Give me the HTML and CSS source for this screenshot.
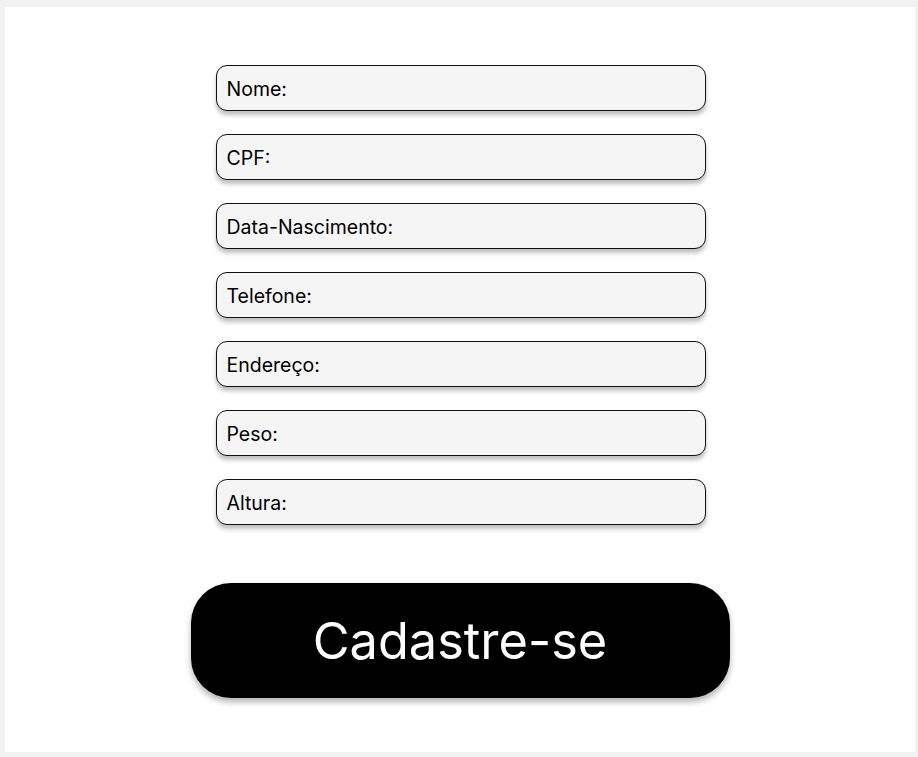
FILE: index.html
```html
<!DOCTYPE html>
<html lang="pt-BR">
<head>
<meta charset="utf-8">
<title>Cadastro</title>
<link rel="stylesheet" href="styles.css">
</head>
<body>
<main class="panel">
  <form class="form">
    <div class="fields">
      <label class="field">Nome:</label>
      <label class="field">CPF:</label>
      <label class="field">Data-Nascimento:</label>
      <label class="field">Telefone:</label>
      <label class="field">Endereço:</label>
      <label class="field">Peso:</label>
      <label class="field">Altura:</label>
    </div>
    <button type="button" class="submit">Cadastre-se</button>
  </form>
</main>
</body>
</html>
```
FILE: styles.css
```css
html, body {
  margin: 0;
  padding: 0;
  background: #f2f2f2;
  font-family: Inter, "Noto Sans", sans-serif;
}
.panel {
  box-sizing: border-box;
  width: 910px;
  height: 745px;
  margin: 7px 0 0 5px;
  background: #ffffff;
  padding-top: 58px;
}
.form {
  display: flex;
  flex-direction: column;
  align-items: center;
}
.fields {
  display: flex;
  flex-direction: column;
  gap: 23px;
  margin-left: 1px;
}
.field {
  box-sizing: border-box;
  width: 490px;
  height: 46px;
  display: flex;
  align-items: center;
  padding-left: 10px;
  padding-top: 1px;
  background: #f5f5f5;
  border: 1.5px solid #111;
  border-radius: 11px;
  box-shadow: 0 4px 4px rgba(0, 0, 0, 0.25);
  font-size: 19.5px;
  color: #000;
}
.submit {
  box-sizing: border-box;
  margin-top: 58px;
  width: 539px;
  height: 115px;
  border: none;
  border-radius: 40px;
  background: #000;
  color: #fff;
  font-family: Inter, "Noto Sans", sans-serif;
  font-size: 50.5px;
  font-weight: 400;
  box-shadow: 0 4px 6px rgba(0, 0, 0, 0.3);
  cursor: pointer;
}
```
